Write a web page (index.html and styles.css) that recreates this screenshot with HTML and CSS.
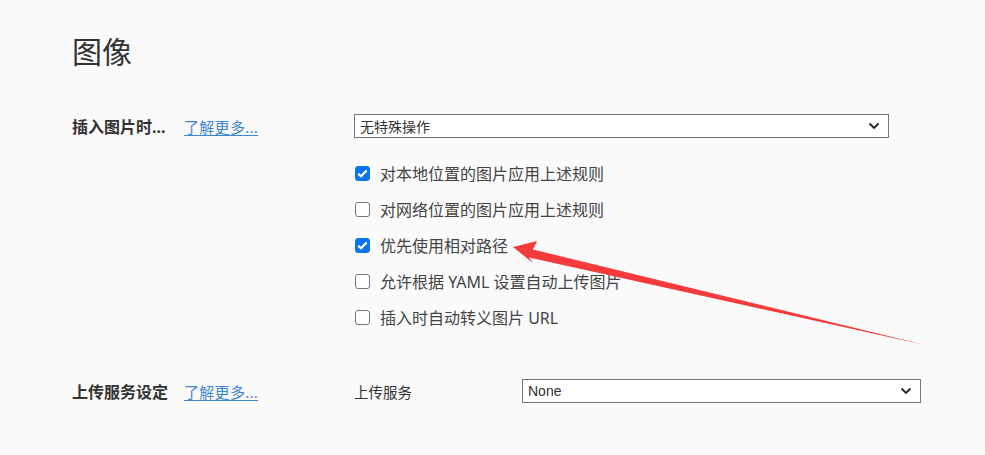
FILE: index.html
```html
<!DOCTYPE html>
<html lang="zh">
<head>
<meta charset="utf-8">
<link rel="stylesheet" href="styles.css">
</head>
<body>
<div class="page">
  <h1 class="title">图像</h1>

  <div class="section">
    <div class="label-col">
      <span class="label">插入图片时...</span>
      <a class="more" href="#">了解更多...</a>
    </div>
    <div class="control-col">
      <div class="select wide">
        <span>无特殊操作</span>
        <svg class="chev" width="12" height="8" viewBox="0 0 12 8"><path d="M1.5 1.5 L6 6 L10.5 1.5" fill="none" stroke="#222" stroke-width="1.8"/></svg>
      </div>
      <div class="checks">
        <label class="check"><input type="checkbox" checked><span>对本地位置的图片应用上述规则</span></label>
        <label class="check"><input type="checkbox"><span>对网络位置的图片应用上述规则</span></label>
        <label class="check"><input type="checkbox" checked><span>优先使用相对路径</span></label>
        <label class="check"><input type="checkbox"><span>允许根据 YAML 设置自动上传图片</span></label>
        <label class="check"><input type="checkbox"><span>插入时自动转义图片 URL</span></label>
      </div>
    </div>
  </div>

  <div class="section upload">
    <div class="label-col">
      <span class="label">上传服务设定</span>
      <a class="more" href="#">了解更多...</a>
    </div>
    <div class="control-col row">
      <span class="sub">上传服务</span>
      <div class="select narrow">
        <span class="latin">None</span>
        <svg class="chev" width="12" height="8" viewBox="0 0 12 8"><path d="M1.5 1.5 L6 6 L10.5 1.5" fill="none" stroke="#222" stroke-width="1.8"/></svg>
      </div>
    </div>
  </div>
</div>

<svg class="arrow" width="985" height="455" viewBox="0 0 985 455">
  <polygon points="513,247 537,241 533,249.5 925,345 529,257.5 533,263" fill="#f53b3b"/>
</svg>
</body>
</html>
```

FILE: styles.css
```css
html, body {
  margin: 0;
  padding: 0;
  background: #fafafa;
}
body {
  width: 985px;
  height: 455px;
  overflow: hidden;
  position: relative;
  font-family: "Noto Sans", "Noto Sans CJK SC", sans-serif;
  color: #333;
}
.page {
  padding: 34px 0 0 72px;
}
.title {
  margin: 0;
  font-size: 30px;
  font-weight: 400;
  line-height: 36px;
  color: #333;
}
.section {
  display: flex;
  margin-top: 44px;
}
.label-col {
  width: 282px;
  display: flex;
  align-items: center;
  height: 24px;
  flex-shrink: 0;
}
.label {
  font-size: 16px;
  font-weight: 700;
  color: #333;
  width: 112px;
}
.more {
  font-size: 15px;
  color: #3f86d1;
  text-decoration: underline;
  text-underline-offset: 2px;
  letter-spacing: 0.3px;
}
.control-col {
  display: flex;
  flex-direction: column;
}
.select {
  box-sizing: border-box;
  height: 24px;
  border: 1px solid #767676;
  background: #fff;
  display: flex;
  align-items: center;
  justify-content: space-between;
  padding: 0 4px 0 5px;
  font-size: 14px;
  color: #333;
}
.select.wide {
  width: 535px;
}
.select.narrow {
  width: 399px;
  margin-left: auto;
}
.latin {
  font-family: "Liberation Sans", Arial, sans-serif;
  font-size: 14px;
}
.chev {
  margin-right: 4px;
}
.checks {
  margin-top: 17px;
  display: flex;
  flex-direction: column;
}
.check {
  display: flex;
  align-items: center;
  height: 36px;
  font-size: 16px;
  color: #444;
}
.check input {
  appearance: none;
  -webkit-appearance: none;
  box-sizing: border-box;
  margin: 0 10px 0 1px;
  width: 15px;
  height: 15px;
  border: 1px solid #767676;
  border-radius: 3px;
  background: #fff;
  flex-shrink: 0;
}
.check input:checked {
  border-color: #0b74f0;
  background: #0b74f0 url("data:image/svg+xml;utf8,<svg xmlns='http://www.w3.org/2000/svg' width='15' height='15' viewBox='0 0 15 15'><path d='M3.3 7.6 L6.1 10.3 L11.6 4.6' fill='none' stroke='white' stroke-width='2.2'/></svg>") center / 15px 15px no-repeat;
}
.upload {
  margin-top: 44px;
}
.row {
  flex-direction: row;
  align-items: center;
  width: 567px;
}
.sub {
  font-size: 14.5px;
  color: #333;
}
.arrow {
  position: absolute;
  left: 0;
  top: 0;
  pointer-events: none;
}
```
